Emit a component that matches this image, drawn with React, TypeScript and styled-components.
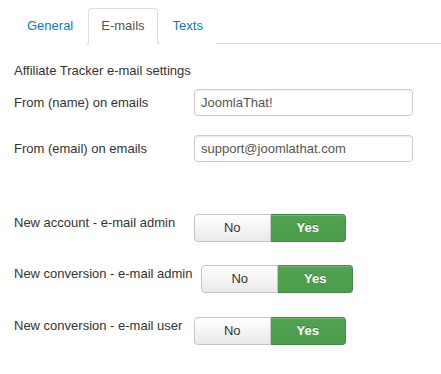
import { ReactElement } from 'react'
import styled, { createGlobalStyle } from 'styled-components'

const GlobalStyle = createGlobalStyle`
  body {
    margin: 0;
    background: #fff;
    font-family: 'Liberation Sans', Arial, sans-serif;
    font-size: 13px;
    line-height: 18px;
    color: #333;
  }
`

const S = {
  Page: styled.div`
    padding: 8px 0 0 14px;
  `,
  Tabs: styled.ul`
    display: flex;
    list-style: none;
    margin: 0;
    padding: 0;
    border-bottom: 1px solid #ddd;
  `,
  Tab: styled.li<{ $active?: boolean }>`
    margin: 0 2px -1px 0;
    padding: 8px 12px 8px;
    line-height: 18px;
    border: 1px solid ${({ $active }) => ($active ? '#ddd' : 'transparent')};
    border-bottom-color: ${({ $active }) => ($active ? '#fff' : 'transparent')};
    border-radius: 4px 4px 0 0;
    background: #fff;
    color: ${({ $active }) => ($active ? '#555' : '#0a7ac8')};
  `,
  Content: styled.div`
    padding-top: 18px;
  `,
  Heading: styled.div`
    margin-bottom: 9px;
  `,
  Row: styled.div<{ $gap: number; $top?: boolean }>`
    display: flex;
    align-items: ${({ $top }) => ($top ? 'flex-start' : 'center')};
    margin-top: ${({ $gap }) => $gap}px;
  `,
  Label: styled.label`
    flex: 0 0 auto;
    min-width: 180px;
    padding-right: 9px;
    box-sizing: border-box;
  `,
  Input: styled.input`
    width: 219px;
    height: 27px;
    box-sizing: border-box;
    padding: 4px 6px;
    border: 1px solid #ccc;
    border-radius: 4px;
    box-shadow: inset 0 1px 1px rgba(0, 0, 0, 0.075);
    font: inherit;
    color: #555;
    outline: none;
  `,
  Toggle: styled.div`
    display: flex;
    width: 152px;
    height: 28px;
  `,
  ToggleButton: styled.button<{ $on?: boolean }>`
    flex: 1;
    margin: 0;
    padding: 0;
    font: inherit;
    font-weight: ${({ $on }) => ($on ? 'bold' : 'normal')};
    color: ${({ $on }) => ($on ? '#fff' : '#333')};
    text-shadow: ${({ $on }) =>
      $on ? '0 -1px 0 rgba(0,0,0,0.25)' : '0 1px 1px rgba(255,255,255,0.75)'};
    background: ${({ $on }) =>
      $on
        ? 'linear-gradient(#51a351, #4b9d4b)'
        : 'linear-gradient(#fff, #e9e9e9)'};
    border: 1px solid ${({ $on }) => ($on ? '#3f8a3f' : '#c5c5c5')};
    border-left-width: ${({ $on }) => ($on ? 0 : 1)}px;
    border-radius: ${({ $on }) => ($on ? '0 4px 4px 0' : '4px 0 0 4px')};
    box-shadow: inset 0 1px 0 rgba(255, 255, 255, 0.2);
  `,
}

type SwitchRowProps = { label: string; gap: number }

const SwitchRow = ({ label, gap }: SwitchRowProps): ReactElement => (
  <S.Row $gap={gap} $top>
    <S.Label>{label}</S.Label>
    <S.Toggle>
      <S.ToggleButton>No</S.ToggleButton>
      <S.ToggleButton $on>Yes</S.ToggleButton>
    </S.Toggle>
  </S.Row>
)

export default function App(): ReactElement {
  return (
    <>
      <GlobalStyle />
      <S.Page>
        <S.Tabs>
          <S.Tab>General</S.Tab>
          <S.Tab $active>E-mails</S.Tab>
          <S.Tab>Texts</S.Tab>
        </S.Tabs>
        <S.Content>
          <S.Heading>Affiliate Tracker e-mail settings</S.Heading>
          <S.Row $gap={0}>
            <S.Label>From (name) on emails</S.Label>
            <S.Input defaultValue="JoomlaThat!" />
          </S.Row>
          <S.Row $gap={19}>
            <S.Label>From (email) on emails</S.Label>
            <S.Input defaultValue="support@joomlathat.com" />
          </S.Row>
          <SwitchRow label="New account - e-mail admin" gap={52} />
          <SwitchRow label="New conversion - e-mail admin" gap={23} />
          <SwitchRow label="New conversion - e-mail user" gap={24} />
        </S.Content>
      </S.Page>
    </>
  )
}
